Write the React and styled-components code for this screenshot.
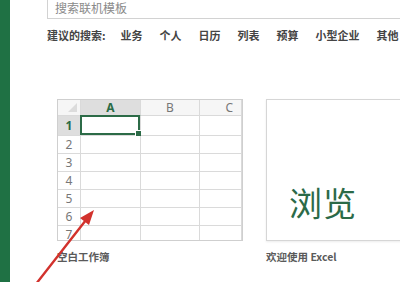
import React from "react";
import styled, { createGlobalStyle } from "styled-components";

const Global = createGlobalStyle`
  html, body { margin: 0; padding: 0; background: #fff; }
  body { font-family: "Noto Sans CJK SC", "Noto Sans", sans-serif; }
`;

const Page = styled.div`
  position: relative;
  width: 400px;
  height: 282px;
  overflow: hidden;
  display: flex;
  background: #fff;
`;

const SideBar = styled.div`
  width: 10px;
  flex: none;
  background: #1f7144;
`;

const Main = styled.div`
  flex: 1;
  padding-left: 37px;
  display: flex;
  flex-direction: column;
  min-width: 0;
`;

const SearchBox = styled.div`
  margin-top: -10px;
  height: 29px;
  width: 420px;
  box-sizing: border-box;
  border: 1px solid #d2d2d2;
  display: flex;
  align-items: flex-end;
  padding: 0 0 3px 7px;
  font-size: 12px;
  color: #8a8a8a;
  line-height: 15px;
`;

const Suggest = styled.div`
  margin-top: 9px;
  display: flex;
  align-items: center;
  gap: 17px;
  white-space: nowrap;
  font-size: 11px;
  line-height: 14px;
  font-weight: 700;
  color: #444;
`;

const SuggestLabel = styled.span`
  margin-right: -2px;
`;

const Tiles = styled.div`
  margin-top: 57px;
  display: flex;
  gap: 23px;
  padding-left: 10px;
`;

const Tile = styled.div`
  display: flex;
  flex-direction: column;
  flex: none;
`;

const TileLabel = styled.div`
  margin-top: 9px;
  font-size: 10.5px;
  line-height: 14px;
  font-weight: 700;
  color: #5a5a5a;
  white-space: nowrap;
`;

const Sheet = styled.div`
  width: 186px;
  height: 142px;
  box-sizing: border-box;
  border: 1px solid #cfcfcf;
  overflow: hidden;
  display: grid;
  grid-template-columns: 23px 60px 59px 42px;
  grid-template-rows: 16px 20px repeat(6, 18px);
`;

const Cell = styled.div`
  position: relative;
  box-sizing: border-box;
  border-right: 1px solid #dadada;
  border-bottom: 1px solid #dadada;
  display: flex;
  align-items: center;
  justify-content: ${(p) => p.$align || "center"};
  padding-right: ${(p) => (p.$align === "flex-end" ? "8px" : "0")};
  font-family: "Noto Sans", sans-serif;
  font-size: 12px;
  color: ${(p) => (p.$active ? "#2a6b46" : "#777")};
  font-weight: ${(p) => (p.$active ? 700 : 400)};
  background: ${(p) => (p.$active ? "#dedede" : p.$head ? "#f6f6f6" : "#fff")};
  ${(p) => (p.$active && p.$col ? "border-bottom: 1px solid #8fb79f;" : "")}
`;

const Corner = styled(Cell)`
  &::after {
    content: "";
    position: absolute;
    right: 3px;
    bottom: 3px;
    width: 0;
    height: 0;
    border-left: 9px solid transparent;
    border-bottom: 9px solid #dcdcdc;
  }
`;

const Selection = styled.div`
  position: absolute;
  inset: -1px 0 0 -1px;
  border: 2px solid #2c6b47;
  &::after {
    content: "";
    position: absolute;
    right: -4px;
    bottom: -4px;
    width: 5px;
    height: 5px;
    background: #2c6b47;
    border: 1px solid #fff;
  }
`;

const Welcome = styled.div`
  width: 160px;
  height: 142px;
  box-sizing: border-box;
  border: 1px solid #d6d6d6;
  box-shadow: 0 1px 2px rgba(0, 0, 0, 0.08);
  display: flex;
  align-items: flex-end;
  padding: 0 0 18px 22px;
`;

const TourText = styled.div`
  font-size: 33px;
  line-height: 40px;
  color: #2b6a48;
  letter-spacing: 1px;
`;

const Arrow = styled.svg`
  position: absolute;
  left: 0;
  top: 0;
  pointer-events: none;
`;

const suggestions = ["业务", "个人", "日历", "列表", "预算", "小型企业", "其他"];
const rows = [1, 2, 3, 4, 5, 6, 7];

export default function App() {
  return (
    <>
      <Global />
      <Page>
        <SideBar />
        <Main>
          <SearchBox>搜索联机模板</SearchBox>
          <Suggest>
            <SuggestLabel>建议的搜索:</SuggestLabel>
            {suggestions.map((s) => (
              <span key={s}>{s}</span>
            ))}
          </Suggest>
          <Tiles>
            <Tile>
              <Sheet>
                <Corner $head />
                <Cell $head $active $col>A</Cell>
                <Cell $head>B</Cell>
                <Cell $head $align="flex-end">C</Cell>
                {rows.map((r) => (
                  <React.Fragment key={r}>
                    <Cell $active={r === 1}>{r}</Cell>
                    <Cell>{r === 1 && <Selection />}</Cell>
                    <Cell />
                    <Cell />
                  </React.Fragment>
                ))}
              </Sheet>
              <TileLabel>空白工作簿</TileLabel>
            </Tile>
            <Tile>
              <Welcome>
                <TourText>浏览</TourText>
              </Welcome>
              <TileLabel>欢迎使用 Excel</TileLabel>
            </Tile>
          </Tiles>
        </Main>
        <Arrow width="400" height="282" viewBox="0 0 400 282">
          <line x1="36" y1="284" x2="86" y2="220" stroke="#d2322d" strokeWidth="2.4" strokeLinecap="round" />
          <polygon points="94,210 80,218 89,225" fill="#d2322d" />
        </Arrow>
      </Page>
    </>
  );
}
